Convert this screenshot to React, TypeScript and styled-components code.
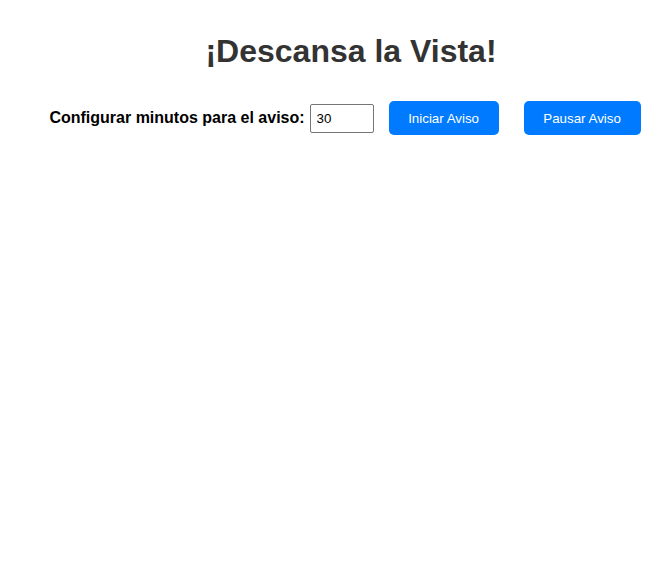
import styled, {createGlobalStyle} from "styled-components";

const GlobalStyle = createGlobalStyle`
    body {
        margin: 0;
        background: #ffffff;
        font-family: "Liberation Sans", Arial, sans-serif;
    }
`

const PageStyle = styled.div`
    padding: 33px 0 0 38px;
    display: flex;
    flex-direction: column;
    align-items: center;
`

const TitleStyle = styled.h1`
    margin: 0;
    font-size: 32px;
    font-weight: bold;
    color: #333333;
    line-height: 37px;
    text-align: center;
`

const RowStyle = styled.div`
    margin-top: 31px;
    padding-right: 12px;
    display: flex;
    flex-direction: row;
    align-items: center;
`

const LabelStyle = styled.label`
    font-size: 16px;
    font-weight: bold;
    color: #000000;
    margin-right: 5px;
`

const InputStyle = styled.input`
    box-sizing: border-box;
    width: 64px;
    height: 29px;
    padding: 0 6px;
    border: 1px solid #767676;
    border-radius: 2px;
    font-family: "Liberation Sans", Arial, sans-serif;
    font-size: 13.33px;
    color: #000000;
    margin-right: 15px;
`

const ButtonStyle = styled.button<{$width: number; $last?: boolean}>`
    box-sizing: border-box;
    width: ${(props) => props.$width}px;
    height: 34px;
    margin-right: ${(props) => props.$last ? 0 : 25}px;
    background-color: #007bff;
    color: #ffffff;
    border: none;
    border-radius: 5px;
    font-family: "Liberation Sans", Arial, sans-serif;
    font-size: 13.33px;
    cursor: pointer;
`

export default function App() {
    return (
        <>
            <GlobalStyle/>
            <PageStyle>
                <TitleStyle>¡Descansa la Vista!</TitleStyle>
                <RowStyle>
                    <LabelStyle htmlFor="minutes">Configurar minutos para el aviso:</LabelStyle>
                    <InputStyle id="minutes" type="number" defaultValue={30}/>
                    <ButtonStyle $width={110}>Iniciar Aviso</ButtonStyle>
                    <ButtonStyle $width={117} $last>Pausar Aviso</ButtonStyle>
                </RowStyle>
            </PageStyle>
        </>
    );
}
